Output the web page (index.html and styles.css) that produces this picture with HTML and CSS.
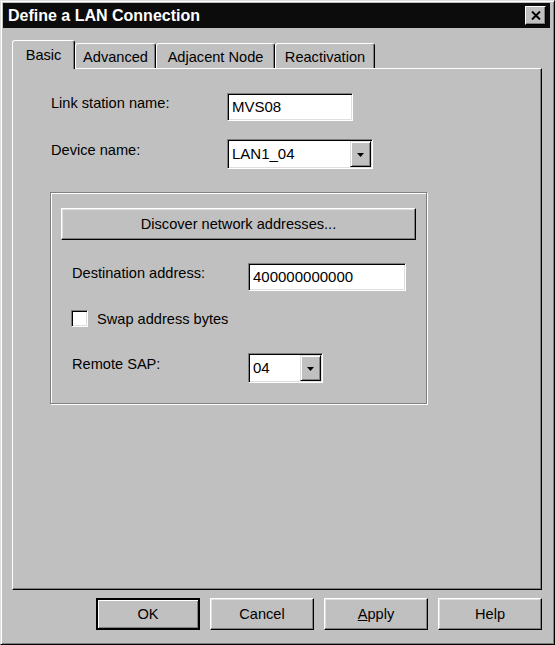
FILE: index.html
```html
<!DOCTYPE html>
<html lang="en">
<head>
<meta charset="utf-8">
<title>Define a LAN Connection</title>
<link rel="stylesheet" href="styles.css">
</head>
<body>
<div class="window">
  <div class="titlebar">
    <span class="title">Define a LAN Connection</span>
    <div class="close-btn">
      <svg width="10" height="9" viewBox="0 0 10 9"><path d="M1 0.5 L9 8.5 M9 0.5 L1 8.5" stroke="#000" stroke-width="2" fill="none"/></svg>
    </div>
  </div>
  <div class="client">
    <div class="tabs">
      <div class="tab active tab-basic">Basic</div>
      <div class="tab tab-advanced">Advanced</div>
      <div class="tab tab-adjacent">Adjacent Node</div>
      <div class="tab tab-react">Reactivation</div>
    </div>
    <div class="panel">
      <div class="row">
        <span class="label">Link station name:</span>
        <div class="field w-link"><span class="value">MVS08</span></div>
      </div>
      <div class="row row-device">
        <span class="label">Device name:</span>
        <div class="combo w-device">
          <span class="value">LAN1_04</span>
          <div class="drop"><svg width="7" height="4" viewBox="0 0 7 4"><path d="M0 0 H7 L3.5 4 Z" fill="#000"/></svg></div>
        </div>
      </div>
      <div class="group">
        <div class="btn btn-discover">Discover network addresses...</div>
        <div class="row row-dest">
          <span class="label">Destination address:</span>
          <div class="field w-dest"><span class="value">400000000000</span></div>
        </div>
        <div class="check-row">
          <span class="checkbox"></span>
          <span class="check-label">Swap address bytes</span>
        </div>
        <div class="row row-sap">
          <span class="label">Remote SAP:</span>
          <div class="combo w-sap">
            <span class="value">04</span>
            <div class="drop"><svg width="7" height="4" viewBox="0 0 7 4"><path d="M0 0 H7 L3.5 4 Z" fill="#000"/></svg></div>
          </div>
        </div>
      </div>
    </div>
    <div class="buttons">
      <div class="btn btn-dlg btn-default">OK</div>
      <div class="btn btn-dlg">Cancel</div>
      <div class="btn btn-dlg"><u>A</u>pply</div>
      <div class="btn btn-dlg">Help</div>
    </div>
  </div>
</div>
</body>
</html>
```

FILE: styles.css
```css
* { box-sizing: border-box; }

body {
  margin: 0;
  background: #c0c0c0;
  font-family: "Liberation Sans", Arial, sans-serif;
  font-size: 14.6px;
  color: #000;
}

.window {
  width: 555px;
  height: 645px;
  background: #c0c0c0;
  border: 1px solid;
  border-color: #dfdfdf #000 #000 #dfdfdf;
  box-shadow: inset 1px 1px #fff, inset -1px -1px #808080;
  padding: 2px 4px 1px 2px;
  display: flex;
  flex-direction: column;
}

.titlebar {
  height: 25px;
  flex: none;
  background: #0c0c0c;
  display: flex;
  justify-content: space-between;
  align-items: flex-start;
}

.title {
  color: #fff;
  font-weight: bold;
  font-size: 16px;
  line-height: 25px;
  padding-left: 5px;
  white-space: nowrap;
}

.close-btn {
  width: 21px;
  height: 19px;
  margin: 3px 4px 0 0;
  background: #c0c0c0;
  border: 1px solid;
  border-color: #fff #000 #000 #fff;
  box-shadow: inset -1px -1px #808080;
  display: flex;
  align-items: center;
  justify-content: center;
}

.client {
  flex: 1;
  padding: 12px 8px 0 9px;
  display: flex;
  flex-direction: column;
}

.tabs {
  height: 28px;
  flex: none;
  display: flex;
  align-items: flex-end;
  position: relative;
  z-index: 1;
}

.tab {
  height: 25px;
  background: #c0c0c0;
  border: 1px solid;
  border-bottom: none;
  border-color: #fff #000 transparent #fff;
  border-radius: 3px 3px 0 0;
  box-shadow: inset -1px 0 #808080;
  padding-top: 5px;
  line-height: 16px;
  text-align: center;
  white-space: nowrap;
}

.tab.active {
  height: 29px;
  margin-bottom: -1px;
  padding-top: 6px;
}

.tab-basic { width: 63px; }
.tab-advanced { width: 81px; }
.tab-adjacent { width: 119px; }
.tab-react { width: 100px; }

.panel {
  height: 522px;
  flex: none;
  border: 1px solid;
  border-color: #fff #000 #000 #fff;
  box-shadow: inset -1px -1px #808080;
  padding: 24px 0 0 38px;
  display: flex;
  flex-direction: column;
  align-items: flex-start;
}

.row {
  display: flex;
  align-items: center;
}

.label {
  width: 176px;
  flex: none;
  line-height: 16px;
  padding-bottom: 8px;
  white-space: nowrap;
}

.row-device { margin-top: 18px; }

.field,
.combo {
  background: #fff;
  border: 1px solid;
  border-color: #808080 #fff #fff #808080;
  box-shadow: inset 1px 1px #000, inset -1px -1px #dfdfdf;
  padding: 1px;
  display: flex;
  align-items: center;
  font-size: 15px;
}

.field { height: 28px; }
.combo { height: 30px; }

.value {
  flex: 1;
  padding-left: 3px;
  line-height: 16px;
  white-space: nowrap;
}

.w-link { width: 126px; }
.w-device { width: 146px; }
.w-dest { width: 158px; }
.w-sap { width: 75px; }

.drop {
  width: 21px;
  height: 26px;
  flex: none;
  background: #c0c0c0;
  border: 1px solid;
  border-color: #dfdfdf #000 #000 #dfdfdf;
  box-shadow: inset 1px 1px #fff, inset -1px -1px #808080;
  display: flex;
  align-items: center;
  justify-content: center;
}

.drop svg { margin-top: 1px; }

.group {
  width: 377px;
  height: 212px;
  margin: 23px 0 0 -1px;
  border: 1px solid #808080;
  box-shadow: 1px 1px 0 #fff, inset 1px 1px 0 #fff;
  display: flex;
  flex-direction: column;
  align-items: flex-start;
}

.btn {
  background: #c0c0c0;
  border: 1px solid;
  border-color: #fff #000 #000 #fff;
  box-shadow: inset -1px -1px #808080, inset 1px 1px #dfdfdf;
  display: flex;
  align-items: center;
  justify-content: center;
  line-height: 16px;
  white-space: nowrap;
}

.btn-discover {
  width: 355px;
  height: 32px;
  margin: 15px 0 0 10px;
}

.row-dest { margin-top: 23px; padding-left: 21px; }

.check-row {
  margin: 19px 0 0 20px;
  display: flex;
  align-items: center;
  gap: 9px;
}

.checkbox {
  width: 17px;
  height: 17px;
  background: #fff;
  border: 1px solid;
  border-color: #808080 #fff #fff #808080;
  box-shadow: inset 1px 1px #000, inset -1px -1px #dfdfdf;
}

.check-label { line-height: 16px; }

.row-sap { margin-top: 26px; padding-left: 21px; }

.buttons {
  margin-top: 8px;
  display: flex;
  justify-content: flex-end;
  gap: 10px;
}

.btn-dlg {
  width: 104px;
  height: 32px;
}

.btn-default {
  border: 2px solid #000;
  box-shadow: inset 1px 1px #fff, inset -1px -1px #808080;
}
```
